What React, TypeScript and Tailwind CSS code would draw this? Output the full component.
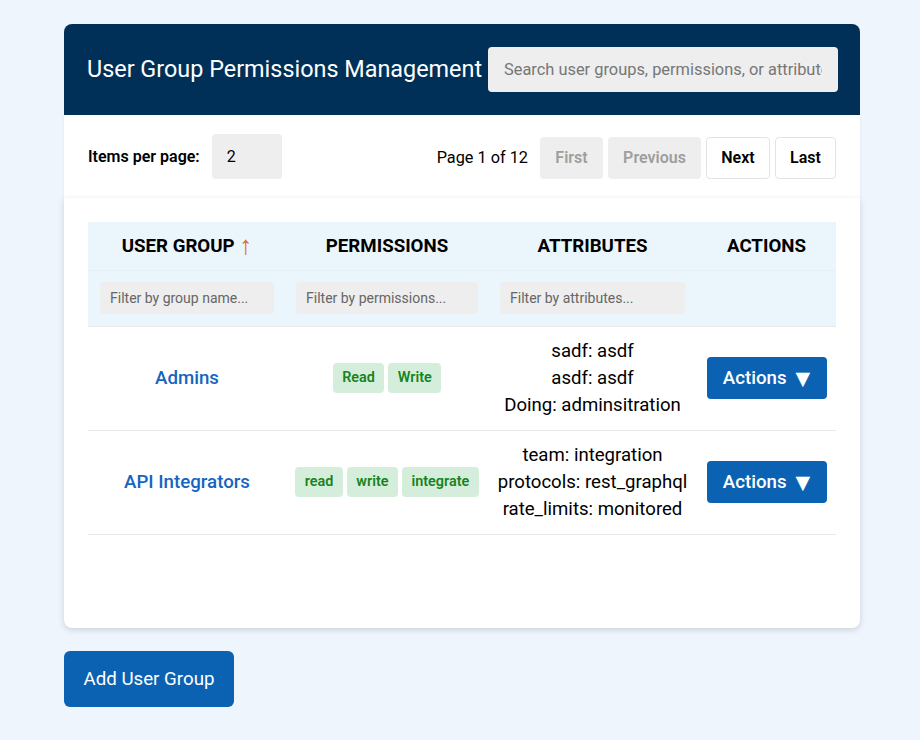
import { useState } from "react";

const GROUPS = [
  {
    name: "Admins",
    permissions: ["Read", "Write"],
    attributes: ["sadf: asdf", "asdf: asdf", "Doing: adminsitration"],
  },
  {
    name: "API Integrators",
    permissions: ["read", "write", "integrate"],
    attributes: ["team: integration", "protocols: rest_graphql", "rate_limits: monitored"],
  },
];

export default function App() {
  const [search, setSearch] = useState("");

  return (
    <div className="min-h-screen bg-[#eef5fc] px-16 pt-6 font-['Roboto',sans-serif] text-black">
      <div className="w-[796px]">
        {/* Header */}
        <div className="flex h-[91px] items-center justify-between rounded-t-lg bg-[#003057] pl-[23px] pr-[22px]">
          <h1 className="text-[23.4px] text-white">User Group Permissions Management</h1>
          <input
            value={search}
            onChange={(e) => setSearch(e.target.value)}
            placeholder="Search user groups, permissions, or attributes..."
            className="h-[45px] w-[350px] rounded bg-[#eeeeee] px-4 text-[16.4px] outline-none placeholder:text-[#777]"
          />
        </div>

        {/* Pagination */}
        <div className="flex h-[83px] items-center justify-between bg-white px-6 shadow-[0_1px_3px_rgba(0,0,0,0.06)]">
          <div className="flex items-center gap-3">
            <span className="text-[16px] font-semibold">Items per page:</span>
            <div className="flex h-[45px] w-[70px] items-center rounded bg-[#eeeeee] px-[15px] text-[16px]">2</div>
          </div>
          <div className="flex items-center gap-[5px] pt-[2px]">
            <span className="mr-[7px] pt-[2px] text-[16.3px]">Page 1 of 12</span>
            <button className="h-[42px] w-[63px] rounded bg-[#eeeeee] text-[16px] font-semibold text-[#9e9e9e]">First</button>
            <button className="h-[42px] w-[93px] rounded bg-[#eeeeee] text-[16px] font-semibold text-[#9e9e9e]">Previous</button>
            <button className="h-[42px] w-[64px] rounded border border-[#e3e3e3] bg-white text-[16px] font-semibold">Next</button>
            <button className="h-[42px] w-[61px] rounded border border-[#e3e3e3] bg-white text-[16px] font-semibold">Last</button>
          </div>
        </div>

        {/* Table card */}
        <div className="h-[430px] rounded-b-lg bg-white p-6 shadow-[0_2px_6px_rgba(0,0,0,0.15)]">
          <table className="w-full table-fixed border-collapse text-center">
            <colgroup>
              <col className="w-[198px]" />
              <col className="w-[202px]" />
              <col className="w-[209px]" />
              <col />
            </colgroup>
            <thead>
              <tr className="h-[48px] bg-[#ebf5fc] text-[18.7px] font-bold">
                <th>
                  USER GROUP{" "}
                  <span className="inline-block align-[-2px] font-['Liberation_Sans',sans-serif] text-[26px] leading-none font-normal text-[#d9731c]">↑</span>
                </th>
                <th>PERMISSIONS</th>
                <th>ATTRIBUTES</th>
                <th>ACTIONS</th>
              </tr>
              <tr className="h-[56px] border-t border-[#e6eef5] bg-[#ebf5fc]">
                <th className="px-3">
                  <input placeholder="Filter by group name..." className="h-8 w-full rounded bg-[#eeeeee] px-[10px] text-[14px] font-normal outline-none placeholder:text-[#666]" />
                </th>
                <th className="px-[10px]">
                  <input placeholder="Filter by permissions..." className="h-8 w-full rounded bg-[#eeeeee] px-[10px] text-[14px] font-normal outline-none placeholder:text-[#666]" />
                </th>
                <th className="px-3">
                  <input placeholder="Filter by attributes..." className="h-8 w-full rounded bg-[#eeeeee] px-[10px] text-[14px] font-normal outline-none placeholder:text-[#666]" />
                </th>
                <th />
              </tr>
            </thead>
            <tbody>
              {GROUPS.map((g) => (
                <tr key={g.name} className="h-[104px] border-t border-b border-[#e8e8e8]">
                  <td className="text-[18.7px] font-medium text-[#1565c0]">{g.name}</td>
                  <td>
                    <div className="flex justify-center gap-1">
                      {g.permissions.map((p) => (
                        <span key={p} className="flex h-[30px] items-center rounded bg-[#d5eedb] px-[9.5px] text-[14.4px] font-semibold text-[#15841c]">
                          {p}
                        </span>
                      ))}
                    </div>
                  </td>
                  <td className="text-[18.6px] leading-[27px]">
                    {g.attributes.map((a) => (
                      <div key={a}>{a}</div>
                    ))}
                  </td>
                  <td>
                    <button className="mx-auto flex h-[42px] w-[120px] items-center justify-center gap-[9px] rounded bg-[#0b62b2] text-[18.7px] font-medium text-white">
                      <span>Actions</span>
                      <span className="font-['DejaVu_Sans',sans-serif] text-[19px] leading-none">▼</span>
                    </button>
                  </td>
                </tr>
              ))}
            </tbody>
          </table>
        </div>

        <button className="mt-[23px] h-[56px] w-[170px] rounded-md bg-[#0b62b2] text-[18.7px] text-white">
          Add User Group
        </button>
      </div>
    </div>
  );
}
